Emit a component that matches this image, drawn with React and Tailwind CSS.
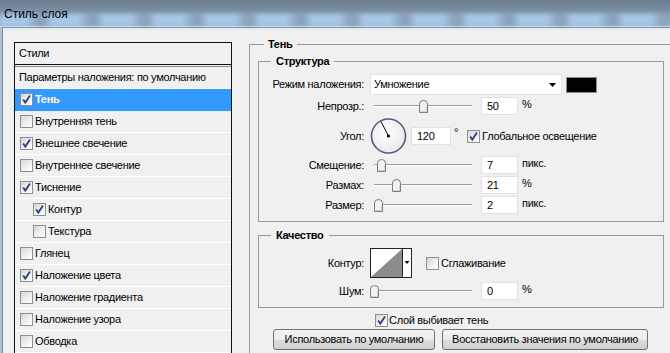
import React from 'react';

function Check({ on }) {
  return (
    <span className="relative inline-flex h-[13px] w-[13px] shrink-0 items-center justify-center border border-[#8e8f8f] bg-gradient-to-br from-[#d6d6d6] via-[#eeeeee] to-[#ffffff]">
      {on && (
        <svg width="11" height="11" viewBox="0 0 11 11" className="absolute left-[0px] top-[0px]">
          <path d="M2.2 5.6L4.3 8.6L9 1.6" fill="none" stroke="#2b3f7d" strokeWidth="1.8" />
        </svg>
      )}
    </span>
  );
}

function Slider({ pos }) {
  return (
    <div className="relative h-[14px] w-[106px] shrink-0">
      <div className="absolute left-[4px] right-[4px] top-[6px] h-[2px] border-t border-[#9d9d9d] bg-white" />
      <svg className="absolute top-[1px]" style={{ left: pos }} width="9" height="13" viewBox="0 0 9 13">
        <path d="M0.5 12.5V4Q0.5 0.5 4.5 0.5Q8.5 0.5 8.5 4V12.5Z" fill="#f2f2f2" stroke="#7d7d7d" />
        <path d="M1.5 11.5H7.5V6" fill="none" stroke="#d0d0d0" />
      </svg>
    </div>
  );
}

function Num({ value, w = 'w-[37px]' }) {
  return (
    <div className={`${w} flex h-[18px] shrink-0 items-center border border-[#e2e2e2] bg-white pl-[5px]`}>
      {value}
    </div>
  );
}

function Label({ children }) {
  return <div className="w-[106px] shrink-0 pr-[1px] text-right">{children}</div>;
}

function SliderRow({ label, pos, value, unit, className }) {
  return (
    <div className={`flex items-center ${className}`}>
      <Label>{label}</Label>
      <div className="ml-[5px]">
        <Slider pos={pos} />
      </div>
      <div className="ml-[5px]">
        <Num value={value} />
      </div>
      <span className="ml-[4px] -mt-[4px]">{unit}</span>
    </div>
  );
}

const styles = [
  { name: 'Тень', on: true, selected: true },
  { name: 'Внутренняя тень' },
  { name: 'Внешнее свечение', on: true },
  { name: 'Внутреннее свечение' },
  { name: 'Тиснение', on: true },
  { name: 'Контур', on: true, sub: true },
  { name: 'Текстура', sub: true },
  { name: 'Глянец' },
  { name: 'Наложение цвета', on: true },
  { name: 'Наложение градиента' },
  { name: 'Наложение узора' },
  { name: 'Обводка' },
];

export default function App() {
  return (
    <div className="h-[353px] w-[670px] overflow-hidden bg-[#f0f0f0] font-['Liberation_Sans',sans-serif] text-[11px] leading-[13px] tracking-[-0.3px] text-black">
      {/* title bar */}
      <div className="relative h-[27px] border-b border-[#dfe8f1] bg-[linear-gradient(180deg,#6c7e90_0%,#7a8ea2_40%,#8fa8c0_70%,#a0bcd6_100%)]">
        <div className="absolute inset-x-0 bottom-0 h-[12px] bg-[repeating-linear-gradient(90deg,#a6c8e8_0px,#a6c8e8_26px,#8aa2ba_38px,#8aa2ba_44px,#a6c8e8_52px)] blur-[2px]" />
        <div className="relative pl-[4px] pt-[7px] text-[12px] leading-[15px] tracking-normal">
          Стиль слоя
        </div>
      </div>

      <div className="flex h-[326px]">
        <div className="w-[2px] shrink-0 bg-[#a8c2da]" />
        <div className="flex flex-1 border-l border-t border-[#7e8a97] pl-[11px]">
          {/* left list */}
          <div className="mt-[14px] w-[218px] shrink-0 border-x border-t border-[#111]">
            <div className="flex h-[22px] items-center border-b border-[#111] pl-[4px]">Стили</div>
            <div className="mt-[1px] border-t border-[#8a8a8a]">
              <div className="flex h-[22px] items-center border-b border-white pl-[4px]">
                Параметры наложения: по умолчанию
              </div>
              {styles.map((s) => (
                <div
                  key={s.name}
                  className={`flex h-[22px] items-center gap-[1px] border-b ${
                    s.selected ? 'border-[#3399ff] bg-[#3399ff] font-bold text-white' : 'border-white'
                  } ${s.sub ? 'pl-[18px]' : 'pl-[5px]'}`}
                >
                  <Check on={s.on} />
                  <span className="ml-[1px]">{s.name}</span>
                </div>
              ))}
            </div>
          </div>

          {/* right panel */}
          <div className="ml-[17px] pt-[10px]">
            <fieldset className="w-[424px] border border-[#9a9a9a] pb-[10px]">
              <legend className="ml-[14px] px-[4px] font-bold">Тень</legend>

              <fieldset className="ml-[8px] mt-[4px] w-[406px] border border-[#9a9a9a] pb-[7px]">
                <legend className="ml-[12px] px-[5px] font-bold">Структура</legend>

                <div className="mt-[6px] flex items-center">
                  <Label>Режим наложения:</Label>
                  <div className="ml-[5px] flex h-[21px] w-[192px] items-center justify-between border border-[#e4e4e4] bg-white pl-[3px] pr-[5px]">
                    <span>Умножение</span>
                    <svg width="7" height="4" viewBox="0 0 7 4">
                      <path d="M0 0H7L3.5 4Z" fill="#000" />
                    </svg>
                  </div>
                  <div className="ml-[4px] h-[16px] w-[31px] border border-[#8c8c8c] bg-black" />
                </div>

                <SliderRow label="Непрозр.:" pos={49} value="50" unit="%" className="mt-[2px]" />

                <div className="mt-[3px] flex items-center">
                  <Label>Угол:</Label>
                  <svg className="ml-[5px] shrink-0" width="37" height="36" viewBox="0 0 37 36">
                    <defs>
                      <radialGradient id="dial" cx="0.45" cy="0.4" r="0.6">
                        <stop offset="0" stopColor="#ffffff" />
                        <stop offset="1" stopColor="#e9e9ee" />
                      </radialGradient>
                    </defs>
                    <circle cx="18.5" cy="18" r="17" fill="url(#dial)" stroke="#505d88" strokeWidth="1.6" />
                    <line x1="18.5" y1="18" x2="11" y2="3.5" stroke="#000" strokeWidth="1" />
                    <circle cx="18.5" cy="18" r="1.6" fill="#000" />
                  </svg>
                  <div className="ml-[4px]">
                    <Num value="120" w="w-[40px]" />
                  </div>
                  <span className="ml-[3px] -mt-[8px]">°</span>
                  <div className="ml-[9px] flex items-center gap-[2px]">
                    <Check on />
                    <span>Глобальное освещение</span>
                  </div>
                </div>

                <SliderRow label="Смещение:" pos={7} value="7" unit="пикс." className="mt-[2px]" />
                <SliderRow label="Размах:" pos={22} value="21" unit="%" className="mt-[2px]" />
                <SliderRow label="Размер:" pos={4} value="2" unit="пикс." className="mt-[2px]" />
              </fieldset>

              <fieldset className="ml-[8px] mt-[7px] w-[406px] border border-[#9a9a9a] pb-[7px]">
                <legend className="ml-[12px] px-[5px] font-bold">Качество</legend>

                <div className="mt-[6px] flex items-center">
                  <Label>Контур:</Label>
                  <svg className="ml-[5px] shrink-0" width="42" height="30" viewBox="0 0 42 30">
                    <rect x="0.5" y="0.5" width="41" height="29" fill="#fff" stroke="#222" />
                    <path d="M1 29L32 1V29Z" fill="#8c8c8c" />
                    <line x1="32.5" y1="1" x2="32.5" y2="29" stroke="#222" />
                    <path d="M34.5 13H39.5L37 16Z" fill="#000" />
                  </svg>
                  <div className="ml-[14px] flex items-center gap-[2px]">
                    <Check />
                    <span>Сглаживание</span>
                  </div>
                </div>

                <SliderRow label="Шум:" pos={0} value="0" unit="%" className="mt-[4px]" />
              </fieldset>

              <div className="ml-[125px] mt-[6px] flex items-center gap-[1px]">
                <Check on />
                <span>Слой выбивает тень</span>
              </div>

              <div className="ml-[23px] mt-[2px] flex gap-[7px]">
                <button className="h-[21px] w-[162px] rounded-[3px] border border-[#707070] bg-[linear-gradient(180deg,#f3f3f3_0%,#ebebeb_50%,#dddddd_51%,#cfcfcf_100%)]">
                  Использовать по умолчанию
                </button>
                <button className="h-[21px] w-[206px] rounded-[3px] border border-[#707070] bg-[linear-gradient(180deg,#f3f3f3_0%,#ebebeb_50%,#dddddd_51%,#cfcfcf_100%)]">
                  Восстановить значения по умолчанию
                </button>
              </div>
            </fieldset>
          </div>
        </div>
      </div>
    </div>
  );
}
